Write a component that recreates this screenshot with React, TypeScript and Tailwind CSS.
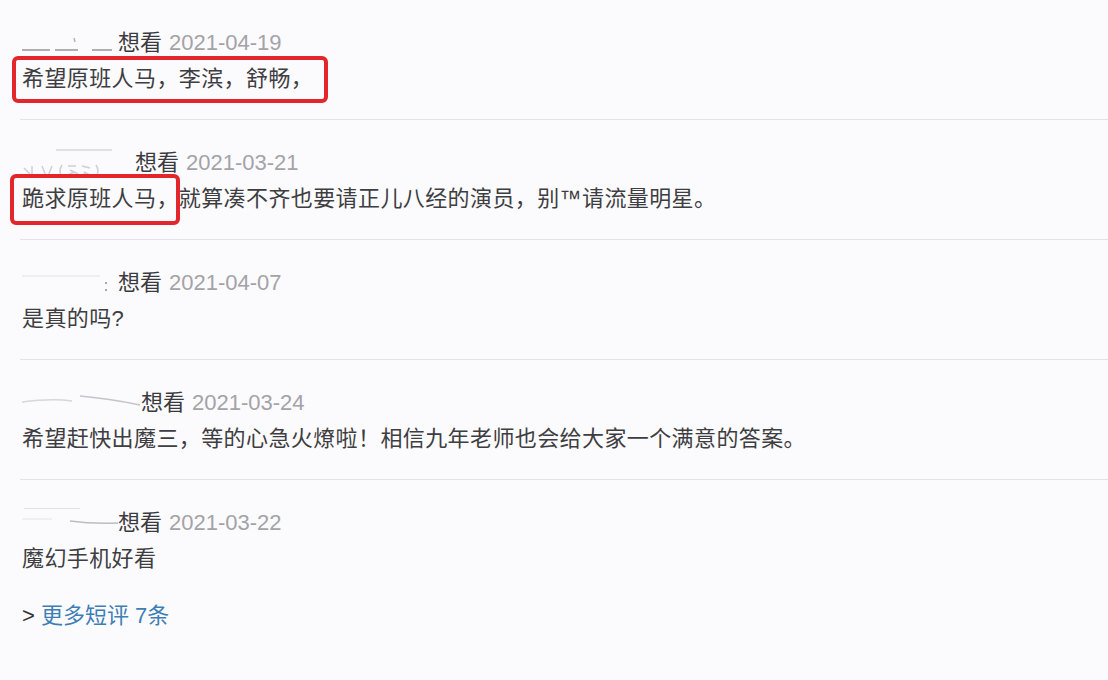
import React from "react";

type Item = {
  nameW: number;
  date: string;
  text: string;
  smudge: React.ReactNode;
  box?: { left: number; top: number; w: number; h: number };
};

const items: Item[] = [
  {
    nameW: 96,
    date: "2021-04-19",
    text: "希望原班人马，李滨，舒畅，",
    smudge: (
      <svg width="96" height="30" className="block">
        <line x1="0" y1="22" x2="28" y2="22" stroke="#6b6b70" strokeWidth="1.5" opacity="0.7" />
        <line x1="33" y1="22" x2="56" y2="22" stroke="#6b6b70" strokeWidth="1.5" opacity="0.7" />
        <line x1="52" y1="10" x2="53" y2="14" stroke="#9a9a9f" strokeWidth="1.5" opacity="0.7" />
        <line x1="70" y1="22" x2="90" y2="22" stroke="#6b6b70" strokeWidth="1.5" opacity="0.7" />
      </svg>
    ),
    box: { left: -10, top: -8, w: 316, h: 47 },
  },
  {
    nameW: 113,
    date: "2021-03-21",
    text: "跪求原班人马，就算凑不齐也要请正儿八经的演员，别™请流量明星。",
    smudge: (
      <svg width="113" height="30" className="block">
        <line x1="34" y1="2" x2="90" y2="2" stroke="#cfcfd6" strokeWidth="1.5" opacity="0.8" />
        <g stroke="#b4b4bc" strokeWidth="1.5" fill="none" opacity="0.6">
          <path d="M2 20 L8 26 M10 18 L10 28" />
          <path d="M20 18 L24 28 M30 18 L26 28" />
          <path d="M40 17 Q36 23 40 29" />
          <path d="M46 18 L54 18 M48 22 L56 26 M44 28 L52 24" />
          <path d="M60 18 L68 20 M62 24 L70 28 M60 28 L64 24" />
          <path d="M74 17 Q78 23 74 29" />
        </g>
      </svg>
    ),
    box: { left: -12, top: -10, w: 170, h: 51 },
  },
  {
    nameW: 96,
    date: "2021-04-07",
    text: "是真的吗?",
    smudge: (
      <svg width="96" height="30" className="block">
        <line x1="0" y1="8" x2="78" y2="8" stroke="#e2e2e8" strokeWidth="1" />
        <line x1="84" y1="14" x2="84" y2="16" stroke="#8a8a90" strokeWidth="1.5" />
        <line x1="84" y1="21" x2="84" y2="23" stroke="#8a8a90" strokeWidth="1.5" />
      </svg>
    ),
  },
  {
    nameW: 119,
    date: "2021-03-24",
    text: "希望赶快出魔三，等的心急火燎啦！相信九年老师也会给大家一个满意的答案。",
    smudge: (
      <svg width="119" height="30" className="block">
        <path d="M0 14 Q30 10 50 13" stroke="#d6d6dc" strokeWidth="1.5" fill="none" />
        <path d="M58 8 Q90 11 118 17" stroke="#c4c4cc" strokeWidth="1.5" fill="none" />
      </svg>
    ),
  },
  {
    nameW: 96,
    date: "2021-03-22",
    text: "魔幻手机好看",
    smudge: (
      <svg width="96" height="30" className="block">
        <line x1="2" y1="0" x2="58" y2="0" stroke="#d9d9df" strokeWidth="1.5" />
        <line x1="0" y1="11" x2="30" y2="11" stroke="#e4e4ea" strokeWidth="1" />
        <path d="M48 13 Q70 16 96 15" stroke="#bcbcc4" strokeWidth="1.5" fill="none" />
      </svg>
    ),
  },
];

export default function App() {
  return (
    <div
      className="w-[1108px] h-[680px] overflow-hidden bg-[#fbfafd] pl-[20px]"
      style={{ fontFamily: '"Liberation Sans", "Noto Sans CJK SC", sans-serif' }}
    >
      {items.map((it, i) => (
        <div
          key={i}
          className={
            "pl-[2px] pt-[28px] pb-[25px] " +
            (i < items.length - 1 ? "border-b border-[#e4e3e9]" : "")
          }
        >
          <div className="flex items-center h-[30px] text-[22px] leading-[30px] whitespace-nowrap">
            <span className="inline-block shrink-0" style={{ width: it.nameW }}>
              {it.smudge}
            </span>
            <span className="text-[#3a3a3e]">想看</span>
            <span className="ml-[7px] text-[#a3a3a8]">{it.date}</span>
          </div>
          <div className="relative mt-[6px] h-[30px] text-[22px] leading-[30px] tracking-[0.4px] text-[#3e3e42] whitespace-nowrap">
            {it.box && (
              <div
                className="absolute border-[4px] border-[#e3262b] rounded-[6px]"
                style={{
                  left: it.box.left,
                  top: it.box.top,
                  width: it.box.w,
                  height: it.box.h,
                }}
              />
            )}
            <span className="relative">{it.text}</span>
          </div>
        </div>
      ))}
      <div className="pl-[2px] mt-[2px] h-[30px] text-[22px] leading-[30px] whitespace-nowrap">
        <span className="text-[#333]">&gt; </span>
        <span className="text-[#3d7eb5]">更多短评 7条</span>
      </div>
    </div>
  );
}
